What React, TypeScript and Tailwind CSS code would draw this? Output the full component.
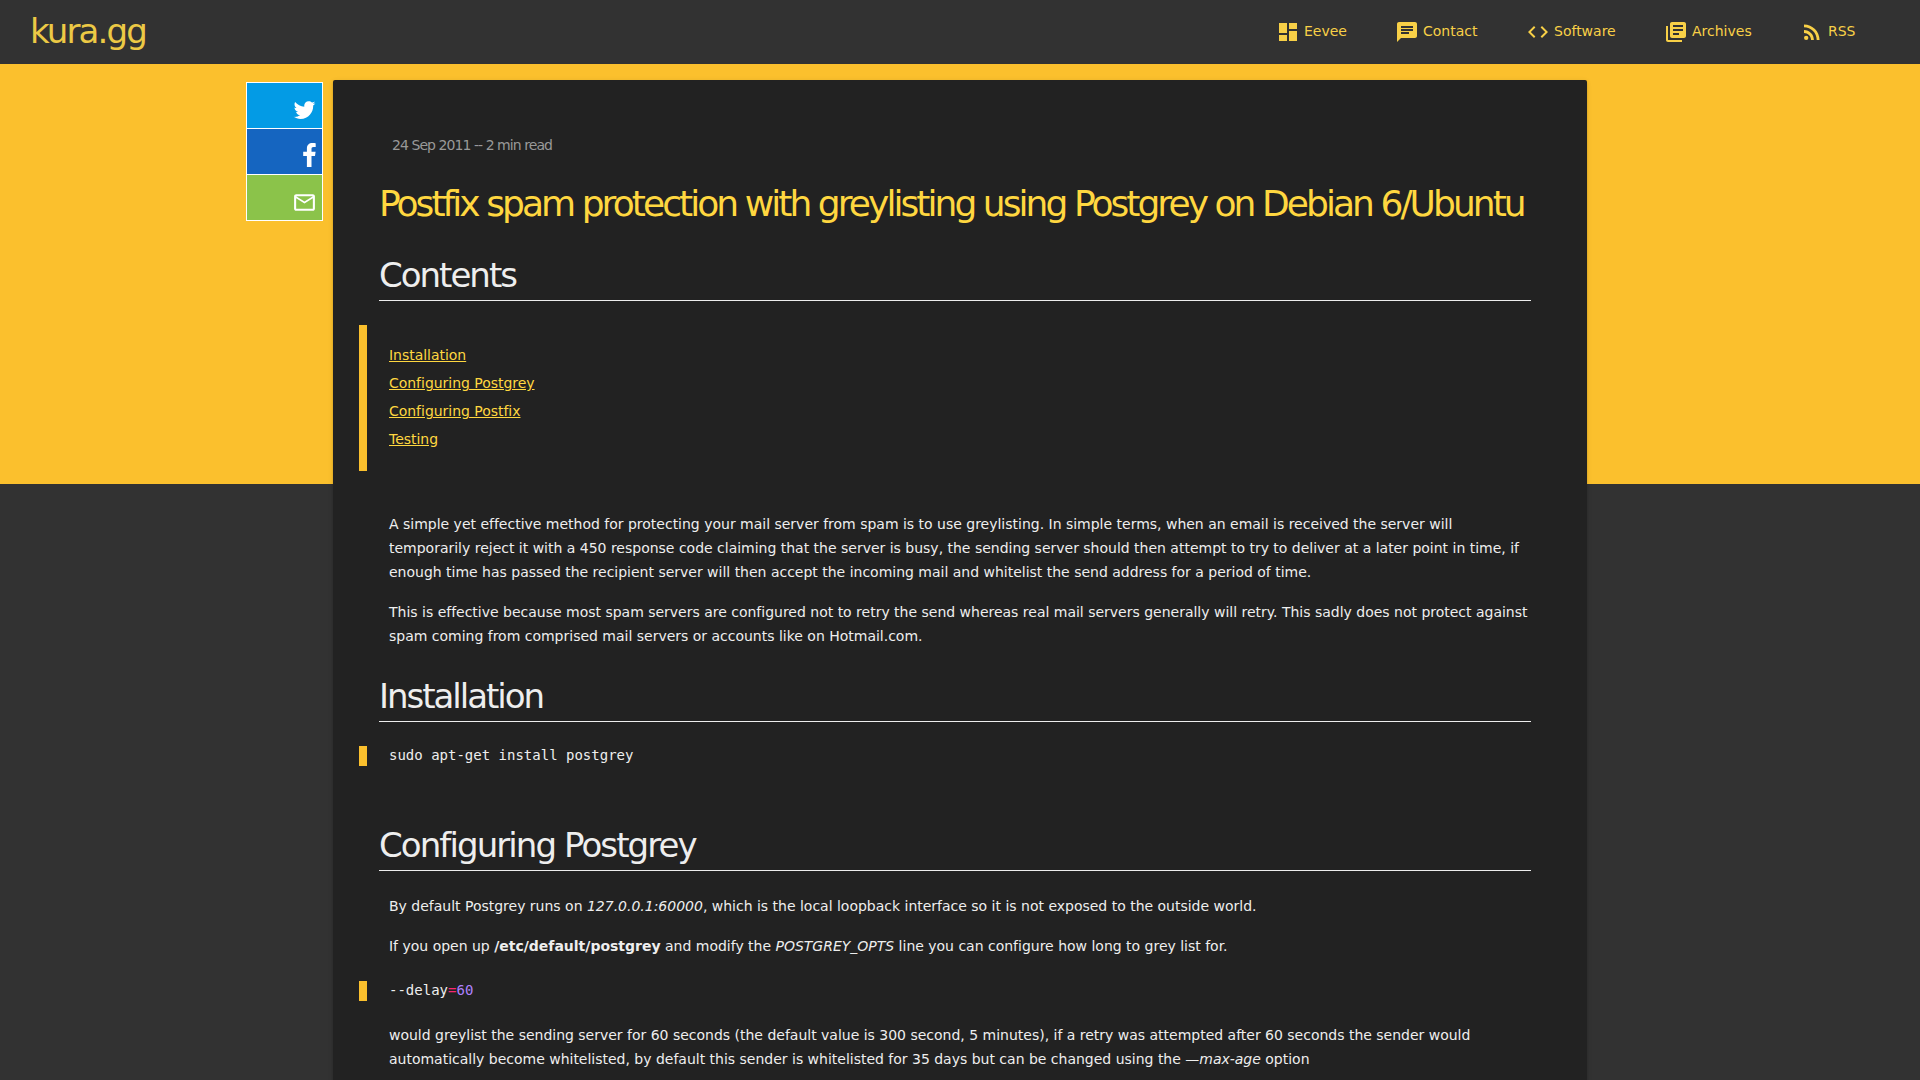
import React from "react";
import { MdDashboard, MdChat, MdCode, MdLibraryBooks, MdRssFeed, MdMailOutline } from "react-icons/md";

const NAV = [
  { label: "Eevee", Icon: MdDashboard, cls: "w-[119px]" },
  { label: "Contact", Icon: MdChat, cls: "w-[131px]" },
  { label: "Software", Icon: MdCode, cls: "w-[138px]" },
  { label: "Archives", Icon: MdLibraryBooks, cls: "w-[136px]" },
  { label: "RSS", Icon: MdRssFeed, cls: "w-[120px]" },
];

const CONTENTS = ["Installation", "Configuring Postgrey", "Configuring Postfix", "Testing"];

function SectionTitle({ children, className = "" }: { children: React.ReactNode; className?: string }) {
  return (
    <h2 className={`ml-[46px] mr-14 h-[46px] border-b border-[#eeeeee] text-[34px] leading-10 ${className}`}>
      {children}
    </h2>
  );
}

function Code({ children, className = "" }: { children: React.ReactNode; className?: string }) {
  return (
    <pre className={`ml-[26px] h-5 border-l-8 border-[#fbc02d] pl-[22px] font-['DejaVu_Sans_Mono',monospace] text-sm leading-[18px] ${className}`}>
      {children}
    </pre>
  );
}

export default function App() {
  return (
    <div className="h-[1080px] overflow-hidden bg-[linear-gradient(#fbc02d_484px,#323232_484px)] font-['DejaVu_Sans',sans-serif] text-sm text-[#eeeeee]">
      <header className="flex h-16 items-center justify-between bg-[#323232] pl-[30px] text-[#f8d047]">
        <a className="pb-0.5 text-[34px] leading-10 tracking-[-1.85px] text-[#ecc945]">kura.gg</a>
        <nav className="flex">
          {NAV.map(({ label, Icon, cls }) => (
            <a key={label} className={`flex items-center gap-1 ${cls}`}>
              <Icon className="size-6" />
              <span className="pb-0.5">{label}</span>
            </a>
          ))}
        </nav>
      </header>
      <div className="flex">
        <aside className="ml-[246px] mt-[18px] flex h-[139px] w-[77px] flex-col gap-px border border-white bg-white text-white">
          <a className="flex h-[45px] items-end justify-end bg-[#039be5] pb-1.5 pr-[5px]">
            <svg viewBox="0 0 24 24" className="size-[25px]" fill="currentColor">
              <path d="M22.46 6c-.77.35-1.6.58-2.46.69.88-.53 1.56-1.37 1.88-2.38-.83.5-1.75.85-2.72 1.05C18.37 4.5 17.26 4 16 4c-2.35 0-4.27 1.92-4.27 4.29 0 .34.04.67.11.98C8.28 9.09 5.11 7.38 3 4.79c-.37.63-.58 1.37-.58 2.15 0 1.49.75 2.81 1.91 3.56-.71 0-1.37-.2-1.95-.5v.03c0 2.08 1.48 3.82 3.44 4.21a4.22 4.22 0 0 1-1.93.07 4.28 4.28 0 0 0 4 2.98 8.521 8.521 0 0 1-5.33 1.84c-.34 0-.68-.02-1.02-.06C3.44 20.29 5.7 21 8.12 21 16 21 20.33 14.46 20.33 8.79c0-.19 0-.37-.01-.56.84-.6 1.56-1.36 2.14-2.23z" />
            </svg>
          </a>
          <a className="flex h-[45px] items-end justify-end bg-[#1565c0] pb-[7px] pr-1.5">
            <svg viewBox="0 0 13 24" className="h-6 w-[13px]" fill="currentColor">
              <path d="M12.7.2V4h-2.200C8.900 4 8.500 4.800 8.500 6v2.700h4.100l-.6 4.200H8.500V24H3.900V12.900H.200V8.700h3.700V5.500C3.900 1.900 6.100 0 9.300 0c1.600 0 3 .1 3.400.2z" />
            </svg>
          </a>
          <a className="flex h-[45px] items-end justify-end bg-[#8bc34a] pb-[5px] pr-[5px]">
            <MdMailOutline className="size-[25px]" />
          </a>
        </aside>
        <main className="ml-2.5 mt-4 h-[1100px] w-[1254px] rounded-[2px] bg-[#222222] shadow-[0_2px_2px_0_rgba(0,0,0,0.14),0_3px_1px_-2px_rgba(0,0,0,0.2),0_1px_5px_0_rgba(0,0,0,0.12)]">
          <div className="ml-[59px] pt-[53px] leading-6 tracking-[-0.94px] text-[#999999]">24 Sep 2011 -- 2 min read</div>
          <h1 className="ml-[46px] mt-[25px] whitespace-nowrap text-[36px] leading-[44px] tracking-[-2.94px] text-[#ffd740]">
            Postfix spam protection with greylisting using Postgrey on Debian 6/Ubuntu
          </h1>
          <SectionTitle className="mt-[29px] tracking-[-2px]">Contents</SectionTitle>
          <ul className="ml-[26px] mt-6 h-[146px] border-l-8 border-[#fbc02d] pl-[22px] pt-4 leading-7 tracking-[-0.03px] text-[#ffd740]">
            {CONTENTS.map((item) => (
              <li key={item}><a className="underline">{item}</a></li>
            ))}
          </ul>
          <div className="ml-14 mt-[41px] space-y-4 whitespace-nowrap leading-6 tracking-[-0.008px]">
            <p>
              A simple yet effective method for protecting your mail server from spam is to use greylisting. In simple terms, when an email is received the server will<br />
              temporarily reject it with a 450 response code claiming that the server is busy, the sending server should then attempt to try to deliver at a later point in time, if<br />
              enough time has passed the recipient server will then accept the incoming mail and whitelist the send address for a period of time.
            </p>
            <p>
              This is effective because most spam servers are configured not to retry the send whereas real mail servers generally will retry. This sadly does not protect against<br />
              spam coming from comprised mail servers or accounts like on Hotmail.com.
            </p>
          </div>
          <SectionTitle className="mt-7 tracking-[-2.03px]">Installation</SectionTitle>
          <Code className="mt-6">sudo apt-get install postgrey</Code>
          <SectionTitle className="mt-[59px] tracking-[-1.91px]">Configuring Postgrey</SectionTitle>
          <div className="ml-14 mt-[23px] space-y-4 leading-6 tracking-[-0.008px]">
            <p>By default Postgrey runs on <em>127.0.0.1:60000</em>, which is the local loopback interface so it is not exposed to the outside world.</p>
            <p>If you open up <strong>/etc/default/postgrey</strong> and modify the <em>POSTGREY_OPTS</em> line you can configure how long to grey list for.</p>
          </div>
          <Code className="mt-[23px]">--delay<span className="text-[#f92672]">=</span><span className="text-[#ae81ff]">60</span></Code>
          <p className="ml-14 mt-[22px] leading-6 tracking-[-0.008px]">
            would greylist the sending server for 60 seconds (the default value is 300 second, 5 minutes), if a retry was attempted after 60 seconds the sender would<br />
            automatically become whitelisted, by default this sender is whitelisted for 35 days but can be changed using the <em>—max-age</em> option
          </p>
        </main>
      </div>
    </div>
  );
}
